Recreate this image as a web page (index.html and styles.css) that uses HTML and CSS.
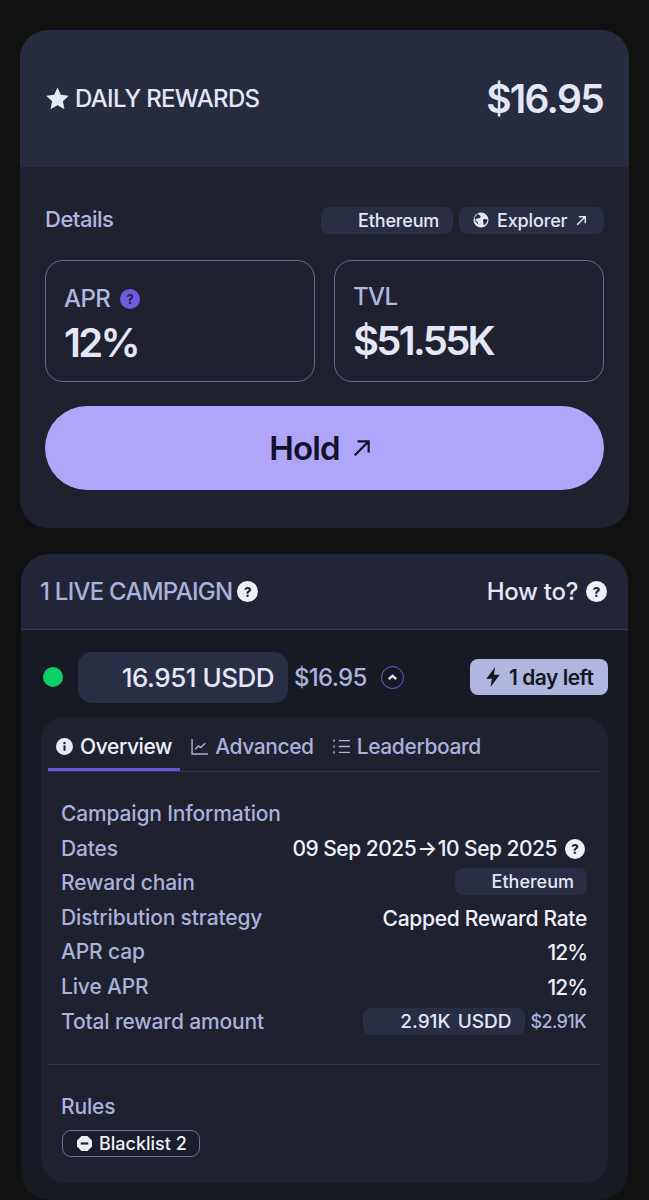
FILE: index.html
```html
<!DOCTYPE html>
<html lang="en">
<head>
    <meta charset="UTF-8">
    <meta name="viewport" content="width=device-width, initial-scale=1.0">
    <title>Daily rewards</title>
    <link rel="stylesheet" href="styles.css">
</head>
<body>
    <section class="rewards-card">
        <header class="rewards-head">
            <div class="rewards-title">
                <svg class="star-icon" viewBox="0 0 24 24"><path d="M12 1.5l3.2 7 7.6.9-5.6 5.2 1.5 7.6L12 18.4l-6.700 3.800 1.500-7.600L1.200 9.400l7.600-.9z"/></svg>
                <span>DAILY REWARDS</span>
            </div>
            <div class="rewards-total">$16.95</div>
        </header>
        <div class="rewards-body">
            <div class="details-row">
                <span class="details-label">Details</span>
                <div class="details-tags">
                    <span class="tag tag-chain">Ethereum</span>
                    <span class="tag tag-explorer">
                        <svg class="globe-icon" viewBox="0 0 16 16"><circle cx="8" cy="8" r="7.5" fill="#e4e6fa"/><path d="M5 1.600c.6 1.500 2 1.700 2.600 2.800.5 1-.8 1.600-1.800 1.900-1.200.4-2.600 0-3.300 1-.6.9.5 1.700 1.500 2.200 1 .5 1.300 1.500 1.200 3L2 9 1.600 5.500z" fill="#2a2e45"/><path d="M10.500 7.500c1-.6 2.500-.6 4 .2-.2 2.500-1.500 4.500-3.500 5.500-.8-1.200-.2-2.300-.8-3.300-.4-.7-.6-1.800.3-2.400z" fill="#2a2e45"/></svg>
                        Explorer
                        <svg class="arrow-small" viewBox="0 0 12 12"><path d="M2 10l7.500-7.500M3.500 2.500h6v6"/></svg>
                    </span>
                </div>
            </div>
            <div class="stat-grid">
                <div class="stat-box stat-box-apr">
                    <div class="stat-label">APR <span class="help-purple">?</span></div>
                    <div class="stat-value">12%</div>
                </div>
                <div class="stat-box">
                    <div class="stat-label">TVL</div>
                    <div class="stat-value">$51.55K</div>
                </div>
            </div>
            <button class="hold-btn">
                Hold
                <svg class="arrow-big" viewBox="0 0 18 18"><path d="M2.500 15.500l12-12M5 3h10v10"/></svg>
            </button>
        </div>
    </section>

    <section class="campaign-card">
        <header class="campaign-head">
            <div class="campaign-title">1 LIVE CAMPAIGN <span class="help-white">?</span></div>
            <div class="howto">How to? <span class="help-white">?</span></div>
        </header>
        <div class="campaign-body">
            <div class="campaign-row">
                <span class="live-dot"></span>
                <span class="amount-pill">16.951 USDD</span>
                <span class="amount-usd">$16.95</span>
                <span class="chevron-btn"><svg viewBox="0 0 10 10"><path d="M3.200 5.800L5 4.200l1.800 1.600"/></svg></span>
                <span class="time-left">
                    <svg viewBox="1 1 12 18"><path d="M9 1L1 11.500h5L4.800 19 13 8H7.800z"/></svg>
                    1 day left
                </span>
            </div>
            <div class="panel">
                <nav class="tabs">
                    <a class="tab tab-active">
                        <svg class="tab-icon" viewBox="0 0 16 16"><circle cx="8" cy="8" r="8" fill="#e8eafc"/><rect x="7" y="7" width="2" height="5" fill="#1f212e"/><rect x="7" y="3.800" width="2" height="2" fill="#1f212e"/></svg>
                        Overview
                    </a>
                    <a class="tab">
                        <svg class="tab-icon line-icon" viewBox="0 0 16 16"><path d="M1 1v14h15M4 10.500l3-3 2 1.500 4.500-4"/></svg>
                        Advanced
                    </a>
                    <a class="tab">
                        <svg class="tab-icon line-icon" viewBox="0 0 16 16"><path d="M5.500 2.500H16M5.500 8H16M5.500 13.500H16M1 1.500v2M1 7v2M1 12.500v2"/></svg>
                        Leaderboard
                    </a>
                </nav>
                <div class="info-list">
                    <div class="info-heading">Campaign Information</div>
                    <div class="info-row">
                        <span class="info-key">Dates</span>
                        <span class="info-val dates">09 Sep 2025<span class="date-arrow">→</span>10 Sep 2025 <span class="help-white">?</span></span>
                    </div>
                    <div class="info-row">
                        <span class="info-key">Reward chain</span>
                        <span class="chain-pill">Ethereum</span>
                    </div>
                    <div class="info-row">
                        <span class="info-key">Distribution strategy</span>
                        <span class="info-val">Capped Reward Rate</span>
                    </div>
                    <div class="info-row">
                        <span class="info-key">APR cap</span>
                        <span class="info-val info-pct">12%</span>
                    </div>
                    <div class="info-row">
                        <span class="info-key">Live APR</span>
                        <span class="info-val info-pct">12%</span>
                    </div>
                    <div class="info-row">
                        <span class="info-key">Total reward amount</span>
                        <span class="total-wrap">
                            <span class="total-pill">2.91K USDD</span>
                            <span class="total-usd">$2.91K</span>
                        </span>
                    </div>
                </div>
                <div class="rules">
                    <div class="info-key">Rules</div>
                    <span class="rule-chip">
                        <svg viewBox="0 0 14 14"><path d="M4.200 0h5.600L14 4.200v5.600L9.800 14H4.200L0 9.800V4.200z" fill="#eceefc"/><rect x="3.500" y="6" width="7" height="2" fill="#1f212e"/></svg>
                        Blacklist 2
                    </span>
                </div>
            </div>
        </div>
    </section>
</body>
</html>
```

FILE: styles.css
```css
body {
    margin: 0;
    padding: 30px 20px 0;
    background-color: #111111;
    font-family: "Inter", sans-serif;
    color: #e4e6fa;
    height: 1200px;
    box-sizing: border-box;
    overflow: hidden;
}

svg {
    display: block;
    flex-shrink: 0;
}

/* top card */
.rewards-card {
    border-radius: 28px;
    overflow: hidden;
    background-color: #1f212e;
}

.rewards-head {
    height: 137px;
    background-color: #262b3d;
    display: flex;
    justify-content: space-between;
    align-items: center;
    padding: 0 26px 0 25px;
}

.rewards-title {
    display: flex;
    align-items: center;
    gap: 5px;
    font-size: 24px;
    font-weight: 500;
    letter-spacing: -0.7px;
}

.star-icon {
    width: 25px;
    height: 25px;
    fill: #e4e6fa;
}

.rewards-total {
    font-size: 39px;
    font-weight: 600;
    letter-spacing: -1.7px;
}

.rewards-body {
    padding: 38px 25px 38px;
}

.details-row {
    display: flex;
    justify-content: space-between;
    align-items: center;
    height: 28px;
}

.details-label {
    font-size: 22px;
    font-weight: 500;
    letter-spacing: -0.5px;
    color: #b0b6e0;
}

.details-tags {
    display: flex;
    gap: 6px;
    margin-top: 2px;
}

.tag {
    display: flex;
    align-items: center;
    height: 27px;
    border-radius: 8px;
    background-color: #2a2e45;
    font-size: 18px;
    font-weight: 500;
    letter-spacing: -0.15px;
    box-sizing: border-box;
}

.tag-chain {
    width: 132px;
    padding-left: 37px;
}

.tag-explorer {
    gap: 8px;
    width: 145px;
    padding-left: 14px;
}

.globe-icon {
    width: 16px;
    height: 16px;
}

.arrow-small {
    width: 13px;
    height: 13px;
    fill: none;
    stroke: #e4e6fa;
    stroke-width: 1.3;
}

.stat-grid {
    display: grid;
    grid-template-columns: 270px 270px;
    justify-content: space-between;
    margin-top: 27px;
}

.stat-box {
    height: 122px;
    box-sizing: border-box;
    border: 1.5px solid #666d94;
    border-radius: 18px;
    padding: 22px 18px 0;
}

.stat-box-apr {
    padding-top: 24px;
}

.stat-label {
    display: flex;
    align-items: center;
    gap: 10px;
    font-size: 24px;
    font-weight: 500;
    letter-spacing: -0.6px;
    color: #b0b6e0;
    line-height: 28px;
}

.stat-value {
    font-size: 40px;
    font-weight: 600;
    letter-spacing: -2.7px;
    line-height: 48px;
    margin-top: 6px;
}

.help-purple {
    width: 20px;
    height: 20px;
    border-radius: 50%;
    background-color: #6f5ae0;
    color: #1f212e;
    font-size: 13px;
    font-weight: 700;
    display: inline-flex;
    align-items: center;
    justify-content: center;
    letter-spacing: 0;
}

.help-white {
    width: 20px;
    height: 20px;
    border-radius: 50%;
    background-color: #eef0fd;
    color: #1f212e;
    font-size: 13px;
    font-weight: 800;
    display: inline-flex;
    align-items: center;
    justify-content: center;
    letter-spacing: 0;
}

.hold-btn {
    width: 100%;
    height: 84px;
    margin-top: 24px;
    padding: 0 8px 0 0;
    border: 0;
    border-radius: 42px;
    background-color: #afa6fc;
    color: #12122a;
    font-family: inherit;
    font-size: 33px;
    font-weight: 600;
    letter-spacing: -0.8px;
    display: flex;
    align-items: center;
    justify-content: center;
    gap: 12px;
}

.arrow-big {
    width: 20px;
    height: 20px;
    fill: none;
    stroke: #12122a;
    stroke-width: 2;
}

/* campaign card */
.campaign-card {
    margin: 26px 1px 0;
    border-radius: 28px;
    overflow: hidden;
    background-color: #171923;
    height: 646px;
}

.campaign-head {
    height: 76px;
    box-sizing: border-box;
    background-color: #212535;
    border-bottom: 1px solid #3a3e50;
    display: flex;
    justify-content: space-between;
    align-items: center;
    padding: 0 21px 0 19px;
    font-size: 24px;
    font-weight: 500;
    letter-spacing: -0.75px;
}

.campaign-head .help-white {
    width: 21px;
    height: 21px;
}

.campaign-title {
    display: flex;
    align-items: center;
    gap: 5px;
    color: #aab1dc;
}

.howto {
    display: flex;
    align-items: center;
    gap: 8px;
    letter-spacing: -0.3px;
}

.campaign-body {
    padding: 21px 20px 0;
}

.campaign-row {
    display: flex;
    align-items: center;
    height: 52px;
    padding-left: 2px;
}

.live-dot {
    width: 20px;
    height: 20px;
    border-radius: 50%;
    background-color: #0bd065;
}

.amount-pill {
    width: 210px;
    height: 51px;
    box-sizing: border-box;
    margin-left: 15px;
    padding-right: 14px;
    border-radius: 14px;
    background-color: #2a2e45;
    display: flex;
    align-items: center;
    justify-content: flex-end;
    font-size: 26px;
    font-weight: 500;
    letter-spacing: -0.5px;
}

.amount-usd {
    margin-left: 6px;
    font-size: 24px;
    font-weight: 500;
    letter-spacing: -0.7px;
    color: #aab1dc;
}

.chevron-btn {
    width: 21px;
    height: 21px;
    margin-left: 14px;
    border: 1.5px solid #6f5ae0;
    border-radius: 50%;
    display: flex;
}

.chevron-btn svg {
    width: 100%;
    fill: none;
    stroke: #e4e6fa;
    stroke-width: 1.1;
}

.time-left {
    margin-left: auto;
    height: 36px;
    width: 138px;
    box-sizing: border-box;
    padding-left: 16px;
    border-radius: 8px;
    background-color: #b0b6e0;
    color: #14161f;
    display: flex;
    align-items: center;
    gap: 9px;
    font-size: 21px;
    font-weight: 600;
    letter-spacing: -0.5px;
}

.time-left svg {
    width: 14px;
    height: 20px;
    fill: #14161f;
}

.panel {
    margin-top: 14px;
    height: 466px;
    box-sizing: border-box;
    border-radius: 24px;
    background-color: #1f212e;
    padding: 0 7px;
}

.tabs {
    display: flex;
    height: 54px;
    border-bottom: 1px solid #32364a;
    gap: 3px;
}

.tab {
    display: flex;
    align-items: center;
    gap: 7px;
    padding: 7px 8px 0;
    font-size: 21px;
    font-weight: 500;
    letter-spacing: -0.4px;
    color: #aab1dc;
    border-bottom: 3px solid transparent;
}

.tab-active {
    color: #f0f1fd;
    border-bottom-color: #6a55d8;
}

.tab-icon {
    width: 17px;
    height: 17px;
}

.line-icon {
    fill: none;
    stroke: #aab1dc;
    stroke-width: 1.3;
}

.info-list {
    padding: 25px 14px 0 13px;
    height: 293px;
    box-sizing: border-box;
    border-bottom: 1px solid #32364a;
}

.info-heading,
.info-key {
    font-size: 21px;
    font-weight: 500;
    letter-spacing: -0.15px;
    color: #aab1dc;
    line-height: 34.6px;
}

.info-row {
    display: flex;
    justify-content: space-between;
    align-items: center;
    height: 34.6px;
}

.info-val {
    font-size: 21px;
    font-weight: 500;
    letter-spacing: -0.3px;
    color: #eef0fd;
}

.info-pct {
    letter-spacing: -1px;
}

.dates {
    display: flex;
    align-items: center;
    letter-spacing: -0.5px;
}

.dates .help-white {
    margin-left: 8px;
    margin-right: 2px;
}

.date-arrow {
    margin: 0 1px;
}

.chain-pill {
    width: 132px;
    height: 27px;
    box-sizing: border-box;
    padding-right: 13px;
    border-radius: 8px;
    background-color: #2a2e45;
    display: flex;
    align-items: center;
    justify-content: flex-end;
    font-size: 18px;
    font-weight: 500;
    margin-top: -3px;
}

.total-wrap {
    display: flex;
    align-items: center;
    gap: 5px;
    margin-right: 1px;
}

.total-pill {
    width: 162px;
    height: 27px;
    box-sizing: border-box;
    padding-right: 14px;
    border-radius: 8px;
    background-color: #2a2e45;
    display: flex;
    align-items: center;
    justify-content: flex-end;
    font-size: 19px;
    font-weight: 500;
    word-spacing: 2px;
}

.total-usd {
    font-size: 18px;
    font-weight: 500;
    letter-spacing: -0.6px;
    color: #aab1dc;
}

.rules {
    padding: 25px 14px 0 13px;
}

.rule-chip {
    display: inline-flex;
    align-items: center;
    gap: 7px;
    height: 27px;
    width: 138px;
    box-sizing: border-box;
    margin: 5px 0 0 1px;
    padding-left: 14px;
    border: 1.5px solid #6d749c;
    border-radius: 9px;
    background-color: #1b1d2a;
    font-size: 18px;
    font-weight: 500;
    color: #eef0fd;
}

.rule-chip svg {
    width: 15px;
    height: 15px;
}
```
